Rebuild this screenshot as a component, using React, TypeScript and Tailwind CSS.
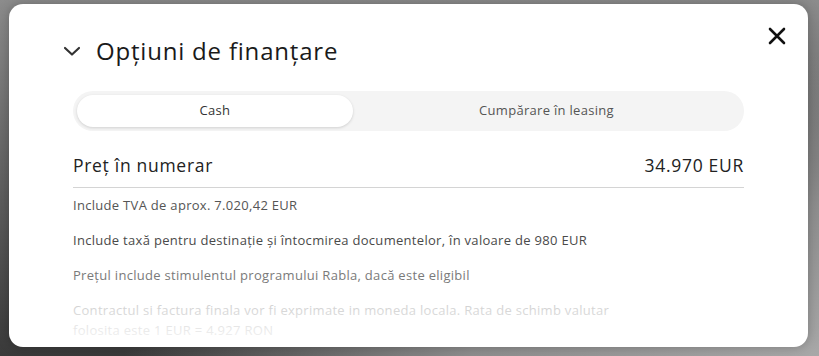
import React, { useState } from 'react';

const notes = [
  { text: 'Include TVA de aprox. 7.020,42 EUR', cls: 'text-[#555]' },
  { text: 'Include taxă pentru destinație și întocmirea documentelor, în valoare de 980 EUR', cls: 'text-[#4a4a4a]' },
  { text: 'Prețul include stimulentul programului Rabla, dacă este eligibil', cls: 'text-[#7a7a7a]' },
];

const Chevron = () => (
  <svg width="18" height="12" viewBox="0 0 18 12" fill="none">
    <path d="M2 3l7 6.5L16 3" stroke="#333" strokeWidth="2.2" strokeLinecap="round" strokeLinejoin="round" />
  </svg>
);

const CloseIcon = () => (
  <svg width="20" height="20" viewBox="0 0 20 20" fill="none">
    <path d="M3 3l14 14M17 3L3 17" stroke="#111" strokeWidth="2.6" strokeLinecap="round" />
  </svg>
);

const App: React.FC = () => {
  const [tab, setTab] = useState<'cash' | 'leasing'>('cash');

  return (
    <div className="w-[819px] h-[356px] overflow-hidden bg-[radial-gradient(ellipse_at_100%_100%,#a8a8a8_0%,#8e8e8e_30%,transparent_60%),linear-gradient(180deg,#8c8c8c_0%,#6a6a6a_40%,#3a3a3a_100%)] pt-[4px] pl-[9px] font-['Open_Sans',sans-serif]">
      <div className="relative w-[799px] h-[343px] rounded-[14px] bg-white overflow-hidden shadow-[0_0_12px_rgba(0,0,0,0.25)]">
        <button className="absolute top-[22px] right-[21px]" aria-label="Închide">
          <CloseIcon />
        </button>

        <div className="pl-[54px] pr-[63px] pt-[31px]">
          <div className="flex items-center gap-[15px]">
            <Chevron />
            <h2 className="text-[24px] leading-[32px] text-[#1a1a1a] tracking-[0.8px]">Opțiuni de finanțare</h2>
          </div>
        </div>

        <div className="px-[64px] pt-[24px]">
          <div className="flex h-[40px] rounded-full bg-[#f4f4f4] p-[4px] text-[13px] tracking-[0.3px]">
            <button
              onClick={() => setTab('cash')}
              className={`w-[276px] rounded-full ${tab === 'cash' ? 'bg-white text-[#333] shadow-[0_1px_3px_rgba(0,0,0,0.15)]' : 'text-[#555]'}`}
            >
              Cash
            </button>
            <button
              onClick={() => setTab('leasing')}
              className={`flex-1 rounded-full ${tab === 'leasing' ? 'bg-white text-[#333] shadow-[0_1px_3px_rgba(0,0,0,0.15)]' : 'text-[#555]'}`}
            >
              Cumpărare în leasing
            </button>
          </div>

          <div className="flex justify-between items-center mt-[22px] pb-[10px] border-b border-[#d4d4d4] text-[17.5px] leading-[24px] text-[#222] tracking-[0.7px]">
            <span>Preț în numerar</span>
            <span>34.970 EUR</span>
          </div>

          <div className="relative">
            <ul className="pt-[7px] text-[13px] leading-[20px] tracking-[0.3px]">
              {notes.map((n) => (
                <li key={n.text} className={`mb-[15px] ${n.cls}`}>
                  {n.text}
                </li>
              ))}
              <li className="text-[#c4c4c4] max-w-[545px]">
                Contractul si factura finala vor fi exprimate in moneda locala. Rata de schimb valutar folosita este 1 EUR = 4.927 RON
              </li>
            </ul>
            <div className="pointer-events-none absolute left-0 right-0 bottom-0 h-[50px] bg-gradient-to-b from-white/0 to-white/80" />
          </div>
        </div>
      </div>
    </div>
  );
};

export default App;
